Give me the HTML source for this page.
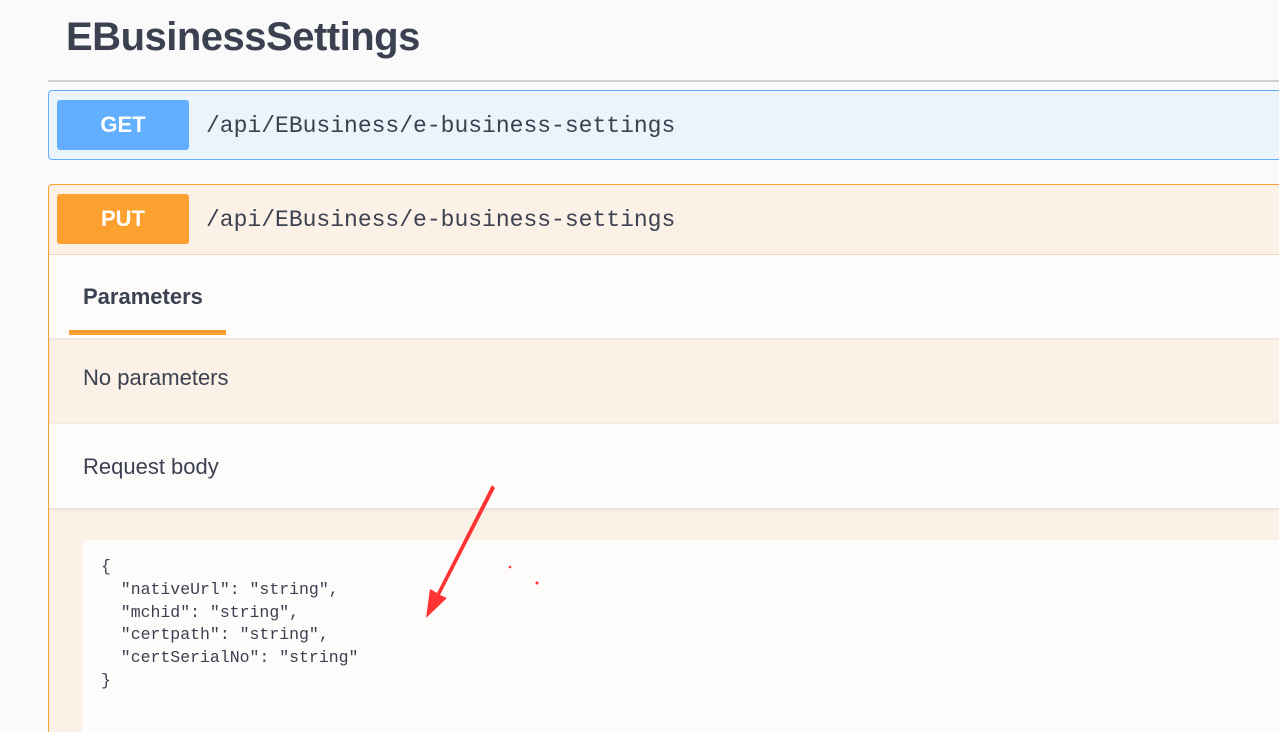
<!DOCTYPE html>
<html><head><meta charset="utf-8"><style>
*{margin:0;padding:0;box-sizing:border-box}
html,body{width:1279px;height:732px;overflow:hidden}
body{background:#fafafa;font-family:"Liberation Sans",sans-serif;color:#3b4151;position:relative}
.h{position:absolute;left:66px;top:15px;font-size:40px;font-weight:bold;color:#3b4151;letter-spacing:-0.5px}
.hl{position:absolute;left:48px;top:80px;width:1240px;height:2px;background:#cfd0d4}
.op{position:absolute;left:48px;width:1240px;border:1px solid;border-radius:4px;overflow:hidden}
.get{top:90px;height:70px;border-color:#61affe;background:#ebf3fb}
.put{top:184px;height:548px;border-color:#fca130;border-bottom:none;border-radius:4px 4px 0 0;background:#fbf1e7}
.b{position:absolute;left:8px;width:132px;height:50px;border-radius:3px;color:#fff;font-weight:bold;font-size:22px;text-align:center;line-height:50px}
.path{position:absolute;left:157px;font-family:"Liberation Mono",monospace;font-size:23px;color:#3b4151}
.sec{position:absolute;left:0;width:1240px}
.code{position:absolute;left:33px;top:355px;width:1220px;height:220px;background:#fdfcfb;border-radius:6px;font-family:"Liberation Mono",monospace;font-size:16.5px;line-height:22.8px;color:#3b4151;padding:16px 0 0 19px;white-space:pre}
</style></head><body>
<div class="h">EBusinessSettings</div>
<div class="hl"></div>
<div class="op get"><div class="b" style="top:9px;background:#61affe">GET</div><div class="path" style="top:22px">/api/EBusiness/e-business-settings</div></div>
<div class="op put"><div class="b" style="top:9px;background:#fca130">PUT</div><div class="path" style="top:22px">/api/EBusiness/e-business-settings</div>
<div class="sec" style="top:69px;height:84px;background:#fdfcfb;border-top:1px solid #f3d6b5"><div style="position:absolute;left:34px;top:29px;font-size:22px;font-weight:bold">Parameters</div><div style="position:absolute;left:20px;top:75px;width:157px;height:5px;background:#fca130"></div></div>
<div class="sec" style="top:153px;height:86px;background:#fbf1e7;box-shadow:0 1px 2px rgba(0,0,0,.08) inset"><div style="position:absolute;left:34px;top:27px;font-size:22px">No parameters</div></div>
<div class="sec" style="top:239px;height:84px;background:#fdfcfb;box-shadow:0 1px 3px rgba(0,0,0,.12)"><div style="position:absolute;left:34px;top:30px;font-size:22px">Request body</div></div>
<div class="code">{
  "nativeUrl": "string",
  "mchid": "string",
  "certpath": "string",
  "certSerialNo": "string"
}</div>
</div>
<svg style="position:absolute;left:0;top:0" width="1279" height="732">
<path d="M492 485 L437 593 L430 589 L426 618 L447 598 L440 595 L495 488 Z" fill="#f33"/>
<circle cx="510" cy="567" r="1.3" fill="#f33"/><circle cx="537" cy="583" r="1.5" fill="#f33"/>
</svg>
</body></html>
